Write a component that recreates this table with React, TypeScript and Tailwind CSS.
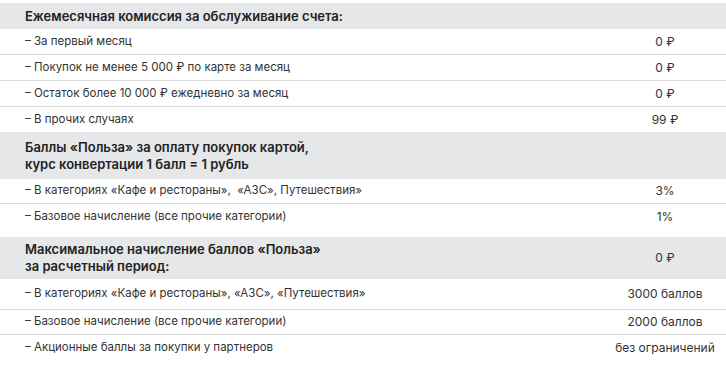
import React from "react"

type Row = {
    label: string,
    value: string,
    h: string,
}

type Section = {
    title: string[],
    value?: string,
    h: string,
    rows: Row[],
}

const sections: Section[] = [
    {
        title: ["Ежемесячная комиссия за обслуживание счета:"],
        h: "h-[26px]",
        rows: [
            { label: "– За первый месяц", value: "0 ₽", h: "h-[26px]" },
            { label: "– Покупок не менее 5 000 ₽ по карте за месяц", value: "0 ₽", h: "h-[26px]" },
            { label: "– Остаток более 10 000 ₽ ежедневно за месяц", value: "0 ₽", h: "h-[26px]" },
            { label: "– В прочих случаях", value: "99 ₽", h: "h-[25px]" },
        ],
    },
    {
        title: ["Баллы «Польза» за оплату покупок картой,", "курс конвертации 1 балл = 1 рубль"],
        h: "h-[47px]",
        rows: [
            { label: "– В категориях «Кафе и рестораны»,  «АЗС», Путешествия»", value: "3%", h: "h-[25px]" },
            { label: "– Базовое начисление (все прочие категории)", value: "1%", h: "h-[33px] pb-[8px]" },
        ],
    },
    {
        title: ["Максимальное начисление баллов «Польза»", "за расчетный период:"],
        value: "0 ₽",
        h: "h-[42px]",
        rows: [
            { label: "– В категориях «Кафе и рестораны», «АЗС», «Путешествия»", value: "3000 баллов", h: "h-[31px]" },
            { label: "– Базовое начисление (все прочие категории)", value: "2000 баллов", h: "h-[25px]" },
            { label: "– Акционные баллы за покупки у партнеров", value: "без ограничений", h: "h-[25px]" },
        ],
    },
]

export default function App() {
    return (
        <div className="w-[726px] h-[368px] bg-white pt-[3px] overflow-hidden text-[#333] font-['Inter','Liberation_Sans',sans-serif]">
            {sections.map((s, i) => (
                <div key={i}>
                    <div className={`${s.h} bg-[#e6e7e9] flex items-center`}>
                        <div className="flex-1 pl-[25px] text-[13px] leading-[17px] font-semibold text-[#222]">
                            {s.title.map((t, j) => <div key={j}>{t}</div>)}
                        </div>
                        <div className="w-[122px] text-center text-[12px]">{s.value}</div>
                    </div>
                    {s.rows.map((r, j) => (
                        <div
                            key={j}
                            className={`${r.h} flex items-center ${j < s.rows.length - 1 ? "border-b border-[#dcdcdc]" : ""}`}
                        >
                            <div className="flex-1 pl-[25px] text-[11.5px] whitespace-pre">{r.label}</div>
                            <div className="w-[122px] text-center text-[12px]">{r.value}</div>
                        </div>
                    ))}
                </div>
            ))}
        </div>
    )
}
